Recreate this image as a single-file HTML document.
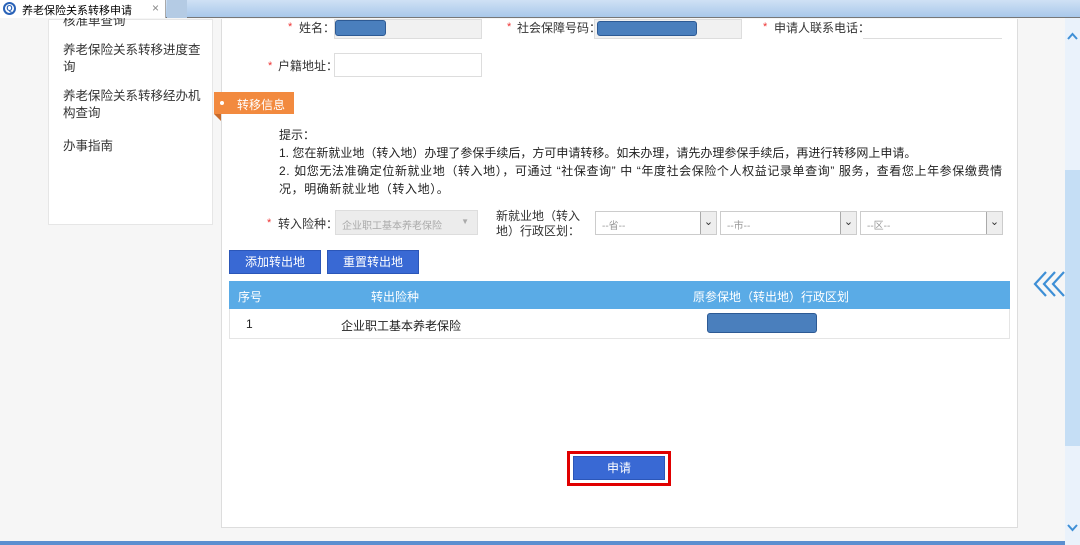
<!DOCTYPE html>
<html><head><meta charset="utf-8"><style>
*{margin:0;padding:0;box-sizing:border-box}
body{width:1080px;height:545px;overflow:hidden;background:#f6f6f6;font-family:"Liberation Sans","Noto Sans CJK SC",sans-serif;font-size:12px;color:#333;position:relative}
.a{position:absolute}
.star{color:#e33;font-size:11px}
.lbl{font-size:12px;color:#333;white-space:nowrap}
.inp{position:absolute;border:1px solid #ddd;background:#fff}
.blk{position:absolute;background:#4a7fbd;border:1px solid #2d5a94;border-radius:3px}
.sel{position:absolute;height:24px;border:1px solid #ccc;background:#fff;color:#999;font-size:10px;padding:5px 6px}
.sel b{position:absolute;right:0;top:0;width:16px;height:22px;border-left:1px solid #aaa;background:#eee;font-weight:normal;color:#333;font-size:11px;text-align:center;line-height:20px}
.btn{position:absolute;background:#3969d4;color:#fff;text-align:center;font-size:12px;border:1px solid #2b56b8}
</style></head><body>
<!-- left nav -->
<div class="a" style="left:48px;top:19px;width:165px;height:206px;background:#fff;border:1px solid #e6e6e6"></div>
<div class="a" style="left:63px;top:10px;font-size:12.5px;color:#333">核准单查询</div>
<div class="a" style="left:63px;top:42px;width:140px;font-size:12.5px;line-height:17px;color:#333">养老保险关系转移进度查询</div>
<div class="a" style="left:63px;top:88px;width:140px;font-size:12.5px;line-height:17px;color:#333">养老保险关系转移经办机构查询</div>
<div class="a" style="left:63px;top:135px;font-size:12.5px;color:#333">办事指南</div>
<!-- tab bar -->
<div class="a" style="left:0;top:0;width:1080px;height:18px;background:linear-gradient(#cfe1f5,#a9c8ea);border-bottom:1px solid #777"></div>
<div class="a" style="left:0;top:0;width:166px;height:18px;background:#fff;border-right:1px solid #aaa"></div>
<div class="a" style="left:3px;top:2px;width:13px;height:13px;border-radius:50%;border:2px solid #2a63b8;color:#2a63b8;font-size:8px;line-height:9px;text-align:center;font-weight:bold">Q</div>
<div class="a" style="left:22px;top:2px;font-size:11px;color:#000">养老保险关系转移申请</div>
<div class="a" style="left:152px;top:1px;font-size:12px;color:#888">×</div>
<div class="a" style="left:167px;top:0;width:20px;height:18px;background:#b4cbe4"></div>
<!-- main panel -->
<div class="a" style="left:221px;top:19px;width:797px;height:509px;background:#fff;border:1px solid #ddd;border-top:none"></div>
<!-- row 1 -->
<span class="a star" style="left:288px;top:21px">*</span><span class="a lbl" style="left:299px;top:19px">姓名：</span>
<div class="inp" style="left:334px;top:19px;width:148px;height:20px;background:#f1f1f1"></div>
<div class="blk" style="left:335px;top:20px;width:51px;height:16px"></div>
<span class="a star" style="left:507px;top:21px">*</span><span class="a lbl" style="left:517px;top:19px">社会保障号码：</span>
<div class="inp" style="left:594px;top:19px;width:148px;height:20px;background:#f1f1f1"></div>
<div class="blk" style="left:597px;top:21px;width:100px;height:15px"></div>
<span class="a star" style="left:763px;top:21px">*</span><span class="a lbl" style="left:774px;top:19px">申请人联系电话：</span>
<div class="a" style="left:863px;top:38px;width:139px;height:1px;background:#ddd"></div>
<!-- row 2 -->
<span class="a star" style="left:268px;top:60px">*</span><span class="a lbl" style="left:278px;top:57px">户籍地址：</span>
<div class="inp" style="left:334px;top:53px;width:148px;height:24px"></div>
<!-- tag -->
<div class="a" style="left:214px;top:92px;width:80px;height:22px;background:#f28a3f"></div>
<div class="a" style="left:214px;top:114px;width:0;height:0;border-top:7px solid #c86a2a;border-left:7px solid transparent"></div>
<div class="a" style="left:220px;top:101px;width:4px;height:4px;background:#fff;border-radius:50%"></div>
<div class="a" style="left:237px;top:96px;color:#fff;font-size:12px">转移信息</div>
<!-- tips -->
<div class="a" style="left:279px;top:126px;width:760px;font-size:12px;line-height:18px;color:#222;white-space:nowrap">提示：<br>1. 您在新就业地（转入地）办理了参保手续后，方可申请转移。如未办理，请先办理参保手续后，再进行转移网上申请。<br><span style="letter-spacing:0.6px">2. 如您无法准确定位新就业地（转入地），可通过 “社保查询” 中 “年度社会保险个人权益记录单查询” 服务，查看您上年参保缴费情</span><br><span style="letter-spacing:0.6px">况，明确新就业地（转入地）。</span></div>
<!-- row 3 -->
<span class="a star" style="left:267px;top:217px">*</span><span class="a lbl" style="left:278px;top:215px">转入险种：</span>
<div class="a" style="left:335px;top:210px;width:143px;height:25px;background:#ececec;border:1px solid #ddd;color:#aaa;font-size:10px;padding:6px 6px">企业职工基本养老保险<span style="position:absolute;right:8px;top:6px;font-size:8px">▼</span></div>
<div class="a lbl" style="left:490px;top:209px;width:90px;text-align:right;line-height:15px;font-size:12px">新就业地（转入<br>地）行政区划：</div>
<div class="sel" style="left:595px;top:211px;width:122px">--省--<b>⌄</b></div>
<div class="sel" style="left:720px;top:211px;width:137px">--市--<b>⌄</b></div>
<div class="sel" style="left:860px;top:211px;width:143px">--区--<b>⌄</b></div>
<!-- buttons -->
<div class="btn" style="left:229px;top:250px;width:92px;height:24px;line-height:22px">添加转出地</div>
<div class="btn" style="left:327px;top:250px;width:92px;height:24px;line-height:22px">重置转出地</div>
<!-- table -->
<div class="a" style="left:229px;top:281px;width:781px;height:28px;background:#5aabe6"></div>
<div class="a" style="left:238px;top:288px;color:#fff">序号</div>
<div class="a" style="left:371px;top:288px;color:#fff">转出险种</div>
<div class="a" style="left:693px;top:288px;color:#fff">原参保地（转出地）行政区划</div>
<div class="a" style="left:229px;top:309px;width:781px;height:30px;border:1px solid #e5e5e5;border-top:none"></div>
<div class="a" style="left:246px;top:317px;color:#222">1</div>
<div class="a" style="left:341px;top:317px;color:#222">企业职工基本养老保险</div>
<div class="blk" style="left:707px;top:313px;width:110px;height:20px"></div>
<!-- submit -->
<div class="a" style="left:567px;top:451px;width:104px;height:35px;border:3px solid #e00000"></div>
<div class="btn" style="left:573px;top:456px;width:92px;height:24px;line-height:22px">申请</div>
<!-- right -->
<svg class="a" style="left:1033px;top:270px" width="34" height="28" viewBox="0 0 34 28" fill="none" stroke="#3e8fd6" stroke-width="2.2"><path d="M13 2L2 14l11 12M22 2L11 14l11 12M31 2L20 14l11 12"/></svg>
<div class="a" style="left:1065px;top:18px;width:15px;height:527px;background:#eaf2fb"></div>
<div class="a" style="left:1065px;top:170px;width:15px;height:276px;background:#c5def5"></div>
<svg class="a" style="left:1067px;top:32px" width="11" height="8"><path d="M1 7L5.5 2 10 7" fill="none" stroke="#3e8fd6" stroke-width="2"/></svg>
<svg class="a" style="left:1067px;top:524px" width="11" height="8"><path d="M1 1L5.5 6 10 1" fill="none" stroke="#3e8fd6" stroke-width="2"/></svg>
<div class="a" style="left:0;top:541px;width:1065px;height:4px;background:#5b8fd0"></div>
</body></html>
